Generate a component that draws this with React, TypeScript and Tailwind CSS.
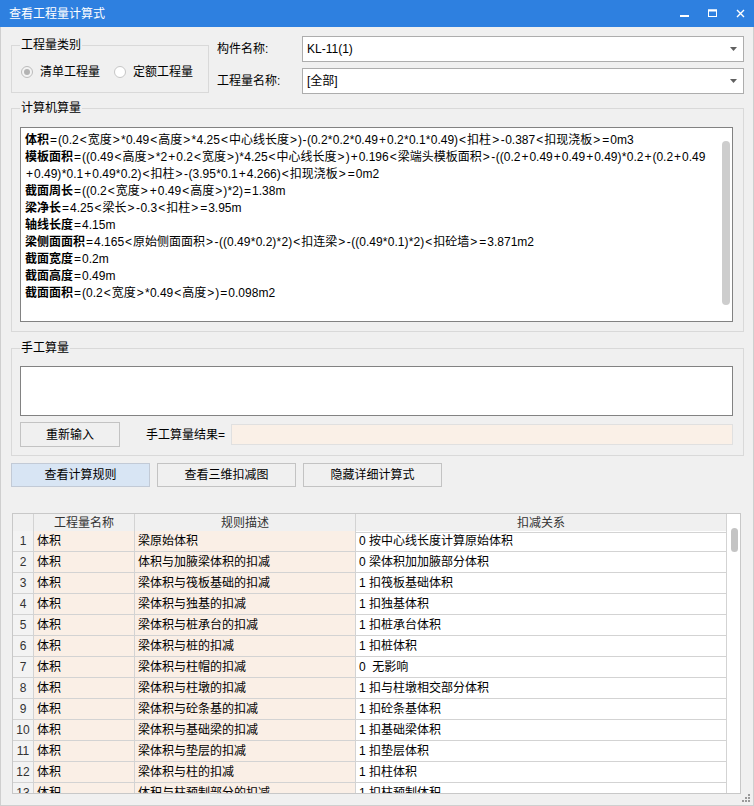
import React from "react"

const calcLines: { b?: string; t: string }[] = [
  { b: "体积", t: "=(0.2<宽度>*0.49<高度>*4.25<中心线长度>)-(0.2*0.2*0.49+0.2*0.1*0.49)<扣柱>-0.387<扣现浇板>=0m3" },
  { b: "模板面积", t: "=((0.49<高度>*2+0.2<宽度>)*4.25<中心线长度>)+0.196<梁端头模板面积>-((0.2+0.49+0.49+0.49)*0.2+(0.2+0.49" },
  { t: "+0.49)*0.1+0.49*0.2)<扣柱>-(3.95*0.1+4.266)<扣现浇板>=0m2" },
  { b: "截面周长", t: "=((0.2<宽度>+0.49<高度>)*2)=1.38m" },
  { b: "梁净长", t: "=4.25<梁长>-0.3<扣柱>=3.95m" },
  { b: "轴线长度", t: "=4.15m" },
  { b: "梁侧面面积", t: "=4.165<原始侧面面积>-((0.49*0.2)*2)<扣连梁>-((0.49*0.1)*2)<扣砼墙>=3.871m2" },
  { b: "截面宽度", t: "=0.2m" },
  { b: "截面高度", t: "=0.49m" },
  { b: "截面面积", t: "=(0.2<宽度>*0.49<高度>)=0.098m2" },
]

const rules = [
  ["体积", "梁原始体积", "0 按中心线长度计算原始体积"],
  ["体积", "体积与加腋梁体积的扣减", "0 梁体积加加腋部分体积"],
  ["体积", "梁体积与筏板基础的扣减", "1 扣筏板基础体积"],
  ["体积", "梁体积与独基的扣减", "1 扣独基体积"],
  ["体积", "梁体积与桩承台的扣减", "1 扣桩承台体积"],
  ["体积", "梁体积与桩的扣减", "1 扣桩体积"],
  ["体积", "梁体积与柱帽的扣减", "0  无影响"],
  ["体积", "梁体积与柱墩的扣减", "1 扣与柱墩相交部分体积"],
  ["体积", "梁体积与砼条基的扣减", "1 扣砼条基体积"],
  ["体积", "梁体积与基础梁的扣减", "1 扣基础梁体积"],
  ["体积", "梁体积与垫层的扣减", "1 扣垫层体积"],
  ["体积", "梁体积与柱的扣减", "1 扣柱体积"],
  ["体积", "体积与柱预制部分的扣减", "1 扣柱预制体积"],
]

// operators are drawn wider in the original font, pad them a little
function formula(s: string) {
  return s.split(/([<>=+\-*])/).map((p, i) => {
    if (p === "<" || p === ">" || p === "=" || p === "+") return <span key={i} className="mx-[1px]">{p}</span>
    if (p === "-") return <span key={i} className="mx-[0.5px]">{p}</span>
    if (p === "*") return <span key={i} className="mx-[0.25px]">{p}</span>
    return p
  })
}

function Combo({ value }: { value: string }) {
  return (
    <div className="flex-1 h-[26px] bg-white border border-[#adadad] flex items-center justify-between pl-[4px] pr-[6px]">
      <span>{value}</span>
      <svg width="7" height="4" viewBox="0 0 7 4"><path d="M0 0h7L3.5 4z" fill="#606060"/></svg>
    </div>
  )
}

export default function App() {
  const legend = "ml-[8px] px-[1px] leading-[16px]"
  const group = "border border-[#d9d9d9] w-full"
  const btn = "h-[24px] w-[139px] border border-[#c3c3c3] bg-[#f0f0f0] flex items-center justify-center"

  return (
    <div className="w-[754px] h-[806px] flex flex-col bg-[#f0f0f0] text-[12px] text-black font-['Liberation_Sans','Noto_Sans_CJK_SC',sans-serif] relative overflow-hidden">
      <div className="h-[27px] bg-[#2e80e0] flex items-center justify-between text-white shrink-0">
        <span className="pl-[9px]">查看工程量计算式</span>
        <div className="flex h-full">
          <div className="w-[28px] flex items-center justify-center">
            <svg width="9" height="9" viewBox="0 0 9 9"><rect x="0" y="6" width="9" height="2" fill="#fff"/></svg>
          </div>
          <div className="w-[28px] flex items-center justify-center">
            <svg width="9" height="9" viewBox="0 0 9 9"><rect x="0.5" y="1" width="8" height="6.5" fill="none" stroke="#fff"/><rect x="0" y="0.5" width="9" height="2" fill="#fff"/></svg>
          </div>
          <div className="w-[28px] flex items-center justify-center">
            <svg width="9" height="9" viewBox="0 0 9 9"><path d="M1 1l7 7M8 1l-7 7" stroke="#fff" strokeWidth="1.4"/></svg>
          </div>
        </div>
      </div>

      <div className="flex-1 pl-[10px] pr-[9px] border-x border-b border-[#cfcfcf]">
        <div className="pt-[9px] flex">
          <fieldset className="mt-[1px] w-[198px] h-[56px] border border-[#d9d9d9] shrink-0">
            <legend className={legend}>工程量类别</legend>
            <div className="mt-[11px] pl-[9px] flex items-center h-[16px]">
              <div className="w-[12px] h-[12px] rounded-full border border-[#bcbcbc] bg-[#f3f3f3] flex items-center justify-center">
                <div className="w-[6px] h-[6px] rounded-full bg-[#b3b3b3]"/>
              </div>
              <span className="ml-[7px]">清单工程量</span>
              <div className="ml-[14px] w-[12px] h-[12px] rounded-full border border-[#c6c6c6] bg-white"/>
              <span className="ml-[7px]">定额工程量</span>
            </div>
          </fieldset>
          <div className="ml-[8px] flex-1 flex flex-col gap-[6px]">
            <div className="flex items-center">
              <span className="w-[85px]">构件名称:</span>
              <Combo value="KL-11(1)"/>
            </div>
            <div className="flex items-center">
              <span className="w-[85px]">工程量名称:</span>
              <Combo value="[全部]"/>
            </div>
          </div>
        </div>

        <fieldset className={group + " mt-[6px] h-[232px]"}>
          <legend className={legend}>计算机算量</legend>
          <div className="mt-[11px] ml-[8px] mr-[10px] h-[195px] bg-white border border-[#828282] flex">
            <div className="flex-1 pl-[4px] pt-[4px] leading-[17px] overflow-hidden">
              {calcLines.map((l, i) => (
                <div key={i} className="whitespace-nowrap">
                  {l.b && <span className="font-bold">{l.b}</span>}{formula(l.t)}
                </div>
              ))}
            </div>
            <div className="pr-[2px]">
              <div className="mt-[13px] w-[8px] h-[164px] rounded-full bg-[#cdcdcd]"/>
            </div>
          </div>
        </fieldset>

        <fieldset className={group + " mt-[8px] h-[116px]"}>
          <legend className={legend}>手工算量</legend>
          <div className="mt-[10px] ml-[8px] mr-[10px] h-[50px] bg-white border border-[#828282]"/>
          <div className="mt-[6px] ml-[8px] mr-[10px] flex items-center">
            <div className="w-[100px] h-[25px] border border-[#c3c3c3] bg-[#f0f0f0] flex items-center justify-center">重新输入</div>
            <span className="ml-[26px]">手工算量结果=</span>
            <div className="ml-[6px] flex-1 h-[21px] bg-[#faf0e7] border border-[#e0e0e0]"/>
          </div>
        </fieldset>

        <div className="mt-[7px] flex gap-[7px]">
          <div className="h-[24px] w-[139px] border border-[#c2cad6] bg-[#d8e5f4] flex items-center justify-center">查看计算规则</div>
          <div className={btn}>查看三维扣减图</div>
          <div className={btn}>隐藏详细计算式</div>
        </div>

        <div className="mt-[26px] ml-[1px] w-[729px] h-[281px] border border-[#c8c8c8] bg-white flex overflow-hidden">
          <div className="w-[714px] flex flex-col">
            <div className="grid grid-cols-[21px_101px_221px_371px] h-[17px] bg-[#f0f0f0] text-[#333] shrink-0">
              <div className="border-r border-b border-[#d3d3d3]"/>
              <div className="border-r border-b border-[#d3d3d3] flex items-center justify-center">工程量名称</div>
              <div className="border-r border-b border-[#d3d3d3] flex items-center justify-center">规则描述</div>
              <div className="border-r border-b border-[#d3d3d3] flex items-center justify-center">扣减关系</div>
            </div>
            {rules.map((r, i) => (
              <div key={i} className="grid grid-cols-[21px_101px_221px_371px] h-[21px] shrink-0">
                <div className="border-r border-b border-[#d3d3d3] bg-[#f3f3f3] text-[#333] flex items-center justify-center">{i + 1}</div>
                <div className="border-r border-b border-[#d3d3d3] bg-[#faefe6] flex items-center pl-[3px]">{r[0]}</div>
                <div className="border-r border-b border-[#d3d3d3] bg-[#faefe6] flex items-center pl-[3px]">{r[1]}</div>
                <div className="border-r border-b border-[#d3d3d3] flex items-center pl-[3px] whitespace-pre">{r[2]}</div>
              </div>
            ))}
          </div>
          <div className="w-[13px] pl-[4px]">
            <div className="mt-[14px] w-[7px] h-[24px] rounded-full bg-[#c4c4c4]"/>
          </div>
        </div>
      </div>

      <svg className="absolute right-[4px] bottom-[4px]" width="9" height="9" viewBox="0 0 9 9">
        <rect x="7" y="1" width="2" height="2" fill="#9a9a9a"/>
        <rect x="4" y="4" width="2" height="2" fill="#9a9a9a"/>
        <rect x="7" y="4" width="2" height="2" fill="#9a9a9a"/>
        <rect x="1" y="7" width="2" height="2" fill="#9a9a9a"/>
        <rect x="4" y="7" width="2" height="2" fill="#9a9a9a"/>
        <rect x="7" y="7" width="2" height="2" fill="#9a9a9a"/>
      </svg>
    </div>
  )
}
